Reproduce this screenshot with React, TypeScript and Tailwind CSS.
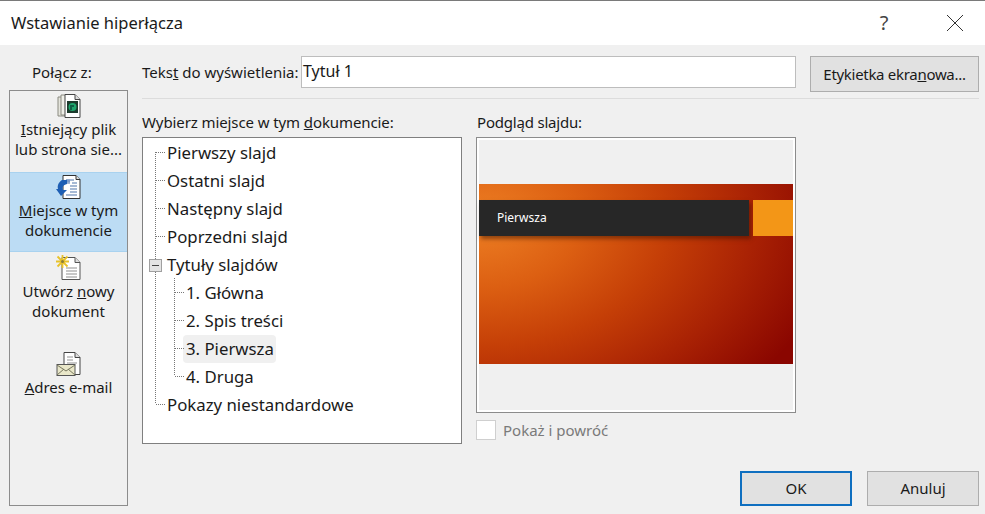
const font = "font-['Noto_Sans','Open_Sans',sans-serif]";

function FileIcon() {
  return (
    <svg width="26" height="26" viewBox="0 0 26 26">
      <path d="M2 4h9v19H2z" fill="#e4e4dc" stroke="#8a8a80" />
      <path d="M5 2h10v20H5z" fill="#efefe8" stroke="#8a8a80" />
      <path d="M9 1.500h10l5 5v18H9z" fill="#fff" stroke="#444" />
      <path d="M19 1.500v5h5" fill="#ddd" stroke="#444" />
      <rect x="11" y="8" width="11" height="12" fill="#1c3a2c" />
      <circle cx="16.500" cy="14" r="4" fill="#1fa56c" />
      <path d="M14 12h4v2h-2v3h-2z" fill="#0f5f46" />
    </svg>
  );
}

function PlaceIcon() {
  return (
    <svg width="26" height="26" viewBox="0 0 26 26">
      <path d="M7 1.500h13l4 4v19H7z" fill="#fff" stroke="#333" />
      <path d="M20 1.500v4h4" fill="#ddd" stroke="#333" />
      <path d="M10 6h8M10 9h4M16 9h5M14 12h7M14 15h7M14 18h7M10 21h11" stroke="#8aa4c8" strokeWidth="1.500" />
      <path d="M10 5.500h4v3h-4z" fill="#7d9cc9" />
      <path d="M6 6c-3 2-5 5-4 9l-2 0 5 7 6-6-4 0c-1-3 0-5 4-6l0-4z" fill="#1e5fb4" />
    </svg>
  );
}

function NewDocIcon() {
  return (
    <svg width="26" height="26" viewBox="0 0 26 26">
      <path d="M6 2.500h13l5 5v17H6z" fill="#fff" stroke="#555" />
      <path d="M19 2.500v5h5" fill="#ddd" stroke="#555" />
      <path d="M10 13h11M10 16h11M10 19h11M10 22h11" stroke="#b5b5b5" strokeWidth="1.500" />
      <path d="M6.500 0v13M0 6.500h13M1.500 1.500l10 10M11.500 1.500l-10 10" stroke="#e8c22a" strokeWidth="1.800" />
      <circle cx="6.500" cy="6.500" r="1.500" fill="#8a7d3a" />
    </svg>
  );
}

function MailIcon() {
  return (
    <svg width="26" height="26" viewBox="0 0 26 26">
      <path d="M8 1.500h11l5 5v17H8z" fill="#fff" stroke="#444" />
      <path d="M19 1.500v5h5" fill="#ddd" stroke="#444" />
      <path d="M11 6h6M11 9h6M11 12h10" stroke="#b8b8b8" strokeWidth="1.500" />
      <rect x="1" y="13.500" width="18" height="11" fill="#e9e7c9" stroke="#555" />
      <path d="M1 14l9 6 9-6M1 24l7-6M19 24l-7-6" stroke="#77775f" fill="none" />
    </svg>
  );
}

function LinkItem({ icon, first, second, className }: { icon: React.ReactNode; first: React.ReactNode; second?: React.ReactNode; className: string }) {
  return (
    <div className={`flex flex-col items-center leading-[20px] text-[#1a1a1a] ${className}`}>
      <div className="h-[26px]">{icon}</div>
      <div className="whitespace-nowrap">{first}</div>
      {second && <div className="whitespace-nowrap">{second}</div>}
    </div>
  );
}

function TreeRow({ label, child, selected }: { label: string; child?: boolean; selected?: boolean }) {
  return (
    <div className={`h-[28px] flex items-center ${child ? "pl-[43px]" : "pl-[24px]"}`}>
      <span className={`h-[28px] leading-[27px] whitespace-nowrap rounded-sm pl-[3px] pr-[2px] -ml-[3px] ${selected ? "bg-[#f0f0f0]" : ""}`}>{label}</span>
    </div>
  );
}

function TreeLines() {
  const rows = [14, 42, 70, 98, 266];
  const kids = [154, 182, 210, 238];
  return (
    <svg className="absolute left-0 top-0" width="60" height="300" viewBox="0 0 60 300">
      <g stroke="#777" strokeDasharray="1 1" fill="none">
        <path d="M12.500 14V266" />
        {rows.map((y) => (
          <path key={y} d={`M13 ${y + 0.5}H23`} />
        ))}
        <path d="M31.500 140V238" />
        {kids.map((y) => (
          <path key={y} d={`M32 ${y + 0.5}H42`} />
        ))}
      </g>
      <rect x="6.500" y="121.500" width="12" height="12" fill="#e4e4e4" stroke="#a0a0a0" />
      <path d="M9 127.500h7" stroke="#444" />
    </svg>
  );
}

export default function App() {
  return (
    <div className={`w-[985px] h-[514px] overflow-hidden bg-[#f0f0f0] text-[15px] text-[#1a1a1a] ${font}`}>
      {/* title bar */}
      <div className="h-[45px] bg-white border-t border-[#7a7a7a] flex items-center">
        <div className="pl-[11px] text-[16.500px] flex-1">Wstawianie hiperłącza</div>
        <div className="w-[20px] text-center text-[20px] text-[#444] mr-[52px]">?</div>
        <svg className="mr-[21px]" width="18" height="18" viewBox="0 0 18 18">
          <path d="M1 1l16 16M17 1L1 17" stroke="#333" strokeWidth="1" fill="none" />
        </svg>
      </div>

      <div className="flex h-[469px]">
        {/* left column */}
        <div className="w-[142px] pl-[9px] shrink-0">
          <div className="h-[45px] pt-[15px] pl-[23px] leading-[24px]">Połącz z:</div>
          <div className="w-[119px] h-[416px] bg-[#f0f0f0] border border-[#8c8c8c]">
            <LinkItem
              className="h-[81px] pt-[2px]"
              icon={<FileIcon />}
              first={<><span className="underline">I</span>stniejący plik</>}
              second="lub strona sie..."
            />
            <LinkItem
              className="h-[80px] pt-[1px] bg-[#bcdcf4] border-y border-[#a9d2ef]"
              icon={<PlaceIcon />}
              first={<><span className="underline">M</span>iejsce w tym</>}
              second="dokumencie"
            />
            <LinkItem
              className="h-[96px] pt-[3px]"
              icon={<NewDocIcon />}
              first={<>Utwórz <span className="underline">n</span>owy</>}
              second="dokument"
            />
            <LinkItem
              className="h-[80px] pt-[3px]"
              icon={<MailIcon />}
              first={<><span className="underline">A</span>dres e-mail</>}
            />
          </div>
        </div>

        {/* main */}
        <div className="w-[837px] pt-[11px]">
          <div className="flex h-[37px] pb-[1px] items-start">
            <label className="w-[159px] h-[32px] leading-[32px] whitespace-nowrap">
              Teks<span className="underline">t</span> do wyświetlenia:
            </label>
            <div className="w-[495px] h-[32px] bg-white border border-[#bdbdbd] text-[16px] leading-[29px] pl-[1px]">Tytuł 1</div>
            <button className="ml-[14px] w-[169px] h-[36px] bg-[#e1e1e1] border border-[#adadad] text-center whitespace-nowrap tracking-[-0.3px]">
              Etykietka ekra<span className="underline">n</span>owa...
            </button>
          </div>
          <div className="mt-[5px] h-px bg-[#dcdcdc]" />

          <div className="flex mt-[14px]">
            <div className="w-[334px]">
              <div className="h-[24px] leading-[18px] whitespace-nowrap tracking-[-0.1px]">
                Wybierz miejsce w tym <span className="underline">d</span>okumencie:
              </div>
              <div className="relative w-[320px] h-[307px] bg-white border border-[#7f7f7f] pt-px text-[16.800px]">
                <TreeLines />
                <TreeRow label="Pierwszy slajd" />
                <TreeRow label="Ostatni slajd" />
                <TreeRow label="Następny slajd" />
                <TreeRow label="Poprzedni slajd" />
                <TreeRow label="Tytuły slajdów" />
                <TreeRow child label="1. Główna" />
                <TreeRow child label="2. Spis treści" />
                <TreeRow child selected label="3. Pierwsza" />
                <TreeRow child label="4. Druga" />
                <TreeRow label="Pokazy niestandardowe" />
              </div>
            </div>

            <div className="w-[320px]">
              <div className="h-[24px] leading-[18px] tracking-[-0.2px] pl-px">Podgląd slajdu:</div>
              <div className="w-[320px] h-[276px] border border-[#8c8c8c] bg-white p-[2px]">
                <div className="h-full bg-[#f0f0f0] flex flex-col justify-center pb-[2px]">
                  <div className="h-[180px] pt-[16px] bg-[radial-gradient(ellipse_115%_135%_at_0%_20%,#ee8024_0%,#dc5f12_28%,#c53f07_52%,#a92204_76%,#8a0600_100%)]">
                    <div className="flex h-[36px]">
                      <div className="w-[270px] bg-[#272727] shadow-[2px_3px_4px_rgba(60,20,0,0.5)] pl-[18px] text-white text-[12px] leading-[35px]">Pierwsza</div>
                      <div className="ml-[4px] flex-1 bg-[#f39617]" />
                    </div>
                  </div>
                </div>
              </div>
              <div className="flex items-center mt-[7px] h-[20px] text-[#7a7a7a]">
                <div className="w-[20px] h-[20px] bg-white border border-[#cfcfcf]" />
                <span className="ml-[7px]">Pokaż i powróć</span>
              </div>
            </div>
          </div>

          <div className="flex justify-end gap-[15px] mt-[27px]">
            <button className="w-[112px] h-[35px] bg-[#e1e1e1] border-2 border-[#0f6fc0]">OK</button>
            <button className="w-[112px] h-[35px] bg-[#e1e1e1] border border-[#adadad]">Anuluj</button>
          </div>
        </div>
      </div>
    </div>
  );
}
